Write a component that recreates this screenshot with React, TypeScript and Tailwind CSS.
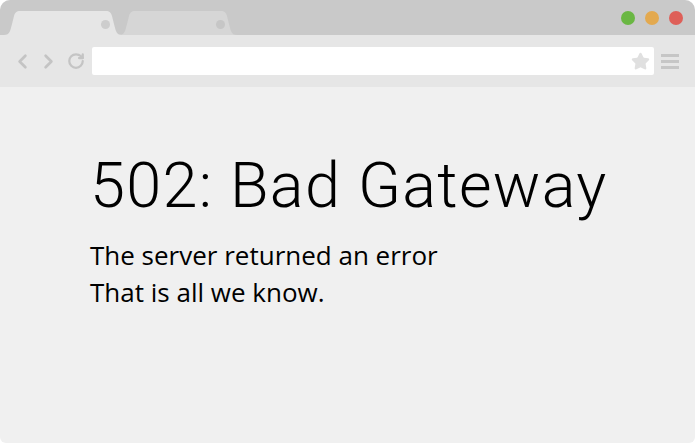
import { ChevronLeft, ChevronRight, RotateCw, Star } from "lucide-react";

function Tab({ fill, dot }: { fill: string; dot: string }) {
  return (
    <div className="relative h-[24px] w-[118px] shrink-0">
      <svg width="118" height="24" viewBox="0 0 118 24" className="absolute inset-0">
        <path
          d="M0 24 C5 24 6 21 7.5 15 L10 5 C11 1.5 12.5 0 16 0 L102 0 C105.5 0 107 1.5 108 5 L110.5 15 C112 21 113 24 118 24 Z"
          fill={fill}
        />
      </svg>
      <span
        className="absolute right-[12px] top-[8.5px] h-[9px] w-[9px] rounded-full"
        style={{ background: dot }}
      />
    </div>
  );
}

export default function App() {
  return (
    <div className="h-[446px] w-[695px] bg-white">
      <div className="flex h-[443px] flex-col overflow-hidden rounded-t-[10px] rounded-b-[6px] bg-[#f0f0f0]">
        <div className="flex h-[35px] shrink-0 items-end justify-between bg-[#c9c9c9] pl-[4px]">
          <div className="flex items-end">
            <div className="relative z-10">
              <Tab fill="#e6e6e6" dot="#cdcdcd" />
            </div>
            <div className="-ml-[3px]">
              <Tab fill="#d6d6d6" dot="#c6c6c6" />
            </div>
          </div>
          <div className="flex gap-[10px] self-center pr-[12px]">
            <span className="h-[14px] w-[14px] rounded-full bg-[#6ab743]" />
            <span className="h-[14px] w-[14px] rounded-full bg-[#e3a94f]" />
            <span className="h-[14px] w-[14px] rounded-full bg-[#de5f58]" />
          </div>
        </div>
        <div className="flex h-[52px] shrink-0 items-center bg-[#e6e6e6] pl-[11px] pr-[16px]">
          <ChevronLeft size={23} strokeWidth={2.8} className="text-[#c4c4c4]" />
          <ChevronRight size={23} strokeWidth={2.8} className="ml-[3px] text-[#c4c4c4]" />
          <RotateCw size={18} strokeWidth={3} className="ml-[7px] text-[#c4c4c4]" />
          <div className="ml-[7px] flex h-[28px] flex-1 items-center justify-end rounded-[2px] bg-white pr-[4px]">
            <Star size={19} fill="#e0e0e0" stroke="#e0e0e0" />
          </div>
          <div className="ml-[7px] flex w-[18px] flex-col gap-[3px]">
            <span className="h-[3px] bg-[#c6c6c6]" />
            <span className="h-[3px] bg-[#c6c6c6]" />
            <span className="h-[3px] bg-[#c6c6c6]" />
          </div>
        </div>
        <div className="flex-1 pl-[90px] pt-[61px] text-black">
          <h1 className="font-['Roboto',sans-serif] text-[63px] font-light leading-[76px] tracking-[1.3px]">
            502: Bad Gateway
          </h1>
          <p className="mt-[13px] font-['Open_Sans',sans-serif] text-[26px] leading-[37px]">
            The server returned an error
            <br />
            That is all we know.
          </p>
        </div>
      </div>
    </div>
  );
}
